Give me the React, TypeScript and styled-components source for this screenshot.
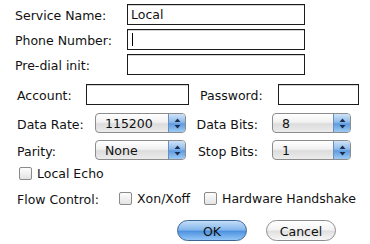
import React from 'react';
import styled, { createGlobalStyle } from 'styled-components';

const GlobalStyle = createGlobalStyle`
  html, body {
    margin: 0;
    padding: 0;
    background: #ffffff;
  }
  body {
    font-family: "DejaVu Sans", "Liberation Sans", sans-serif;
    font-size: 12.5px;
    color: #111;
  }
`;

const Form = styled.div`
  width: 370px;
  height: 244px;
  box-sizing: border-box;
  padding: 4px 0 0 15px;
  display: flex;
  flex-direction: column;
`;

const Row = styled.div<{ $top?: number; $indent?: number }>`
  display: flex;
  align-items: center;
  margin-top: ${p => p.$top ?? 0}px;
  padding-left: ${p => p.$indent ?? 0}px;
`;

const Label = styled.div<{ $width: number; $right?: boolean; $gap?: number }>`
  width: ${p => p.$width}px;
  box-sizing: border-box;
  padding-left: ${p => p.$gap ?? 0}px;
  flex: none;
  text-align: ${p => (p.$right ? 'right' : 'left')};
  padding-top: 2px;
  white-space: nowrap;
`;

const TextBox = styled.div<{ $width: number }>`
  width: ${p => p.$width}px;
  height: 21px;
  box-sizing: border-box;
  border: 1px solid #1c1c1c;
  box-shadow: inset 0 1px 0 #d4d4d4;
  background: #fff;
  display: flex;
  align-items: center;
  padding-left: 3px;
  flex: none;
`;

const Caret = styled.span`
  width: 1px;
  height: 13px;
  background: #000;
  margin-left: 1px;
`;

const Popup = styled.div<{ $width: number }>`
  position: relative;
  width: ${p => p.$width}px;
  height: 20px;
  box-sizing: border-box;
  border: 1px solid #8c8c8c;
  border-radius: 4px;
  background: linear-gradient(#ffffff 0%, #f1f1f1 45%, #dcdcdc 55%, #ececec 100%);
  display: flex;
  align-items: center;
  padding-left: 9px;
  padding-top: 1px;
  overflow: hidden;
  flex: none;
`;

const Stepper = styled.div`
  position: absolute;
  top: 0;
  right: 0;
  bottom: 0;
  width: 16px;
  border-left: 1px solid #6a8fbf;
  background: linear-gradient(#cfe3f8 0%, #8dbbea 45%, #5d9be0 55%, #9ecbf4 100%);
  display: flex;
  align-items: center;
  justify-content: center;
`;

const Spacer = styled.div<{ $width: number }>`
  width: ${p => p.$width}px;
  flex: none;
`;

const Check = styled.span`
  width: 13px;
  height: 13px;
  box-sizing: border-box;
  border: 1px solid #8a8a8a;
  border-radius: 2px;
  background: linear-gradient(#fdfdfd, #e4e4e4);
  flex: none;
`;

const CheckText = styled.span`
  margin-left: 5px;
  white-space: nowrap;
`;

const Option = styled.div<{ $width?: number }>`
  display: flex;
  align-items: center;
  width: ${p => (p.$width ? `${p.$width}px` : 'auto')};
  flex: none;
`;

const Buttons = styled.div`
  display: flex;
  align-items: center;
  gap: 19px;
  margin-top: 13px;
  padding-left: 162px;
`;

const PushButton = styled.div<{ $primary?: boolean }>`
  width: 70px;
  height: 21px;
  box-sizing: border-box;
  border-radius: 11px;
  display: flex;
  align-items: center;
  justify-content: center;
  border: 1px solid ${p => (p.$primary ? '#3f6594' : '#8d8d8d')};
  background: ${p =>
    p.$primary
      ? 'linear-gradient(#c4def8 0%, #86b8ec 45%, #4f93e0 55%, #94c6f6 100%)'
      : 'linear-gradient(#ffffff 0%, #f3f3f3 45%, #e0e0e0 55%, #f7f7f7 100%)'};
  padding-top: 1px;
`;

const Arrows = () => (
  <svg width="7" height="11" viewBox="0 0 7 11">
    <path d="M3.5 0.5 L6.5 4 L0.5 4 Z" fill="#1b2e52" />
    <path d="M3.5 10.5 L6.5 7 L0.5 7 Z" fill="#1b2e52" />
  </svg>
);

const Select = ({ width, value }: { width: number; value: string }) => (
  <Popup $width={width}>
    {value}
    <Stepper>
      <Arrows />
    </Stepper>
  </Popup>
);

export default function App() {
  return (
    <>
      <GlobalStyle />
      <Form>
        <Row>
          <Label $width={112}>Service Name:</Label>
          <TextBox $width={178}>Local</TextBox>
        </Row>
        <Row $top={4}>
          <Label $width={112}>Phone Number:</Label>
          <TextBox $width={178}>
            <Caret />
          </TextBox>
        </Row>
        <Row $top={4}>
          <Label $width={112}>Pre-dial init:</Label>
          <TextBox $width={178} />
        </Row>

        <Row $top={9} $indent={2}>
          <Label $width={69}>Account:</Label>
          <TextBox $width={103} />
          <Label $width={89} $gap={11}>
            Password:
          </Label>
          <TextBox $width={81} />
        </Row>

        <Row $top={8} $indent={2}>
          <Label $width={78}>Data Rate:</Label>
          <Select width={91} value="115200" />
          <Label $width={72} $right>
            Data Bits:
          </Label>
          <Spacer $width={14} />
          <Select width={79} value="8" />
        </Row>
        <Row $top={7} $indent={2}>
          <Label $width={78}>Parity:</Label>
          <Select width={91} value="None" />
          <Label $width={72} $right>
            Stop Bits:
          </Label>
          <Spacer $width={14} />
          <Select width={79} value="1" />
        </Row>

        <Row $top={6} $indent={4}>
          <Option>
            <Check />
            <CheckText>Local Echo</CheckText>
          </Option>
        </Row>
        <Row $top={9} $indent={2}>
          <Label $width={102}>Flow Control:</Label>
          <Option $width={85}>
            <Check />
            <CheckText>Xon/Xoff</CheckText>
          </Option>
          <Option>
            <Check />
            <CheckText>Hardware Handshake</CheckText>
          </Option>
        </Row>

        <Buttons>
          <PushButton $primary>OK</PushButton>
          <PushButton>Cancel</PushButton>
        </Buttons>
      </Form>
    </>
  );
}
